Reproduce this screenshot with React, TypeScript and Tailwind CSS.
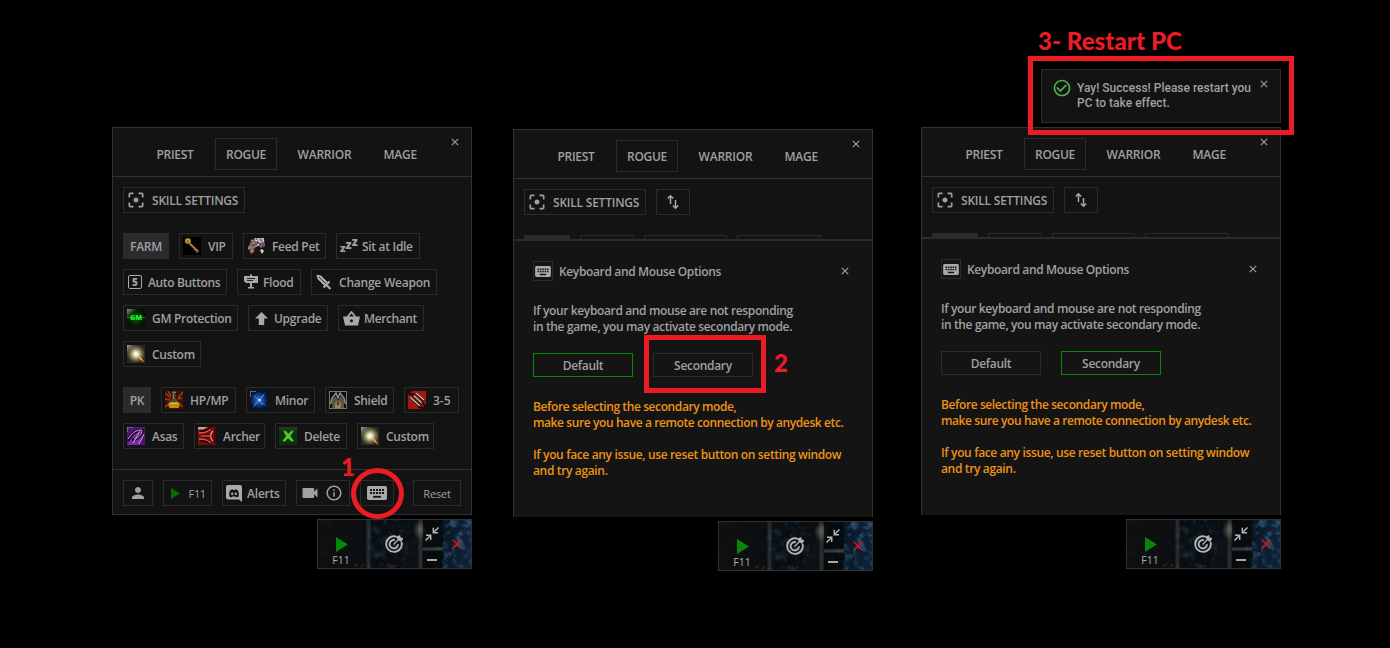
import React, { useId } from "react";
import { MdFilterCenterFocus, MdPerson, MdVideocam, MdInfoOutline, MdCheckCircleOutline } from "react-icons/md";

const art = "block h-[18px] w-[18px] shrink-0";

function Close({ className = "" }: { className?: string }) {
  return (
    <svg viewBox="0 0 8 8" className={`h-2 w-2 ${className}`} stroke="currentColor" strokeWidth="1.1" fill="none">
      <path d="M.8.8l6.4 6.4M7.2.8L.8 7.2" />
    </svg>
  );
}

function Keyboard({ className = "" }: { className?: string }) {
  return (
    <svg viewBox="0 0 20 14" className={className}>
      <rect width="20" height="14" rx="1.8" fill="#a9a9a9" />
      <path d="M3 4h14M3 7h14" stroke="#141414" strokeWidth="1.9" strokeDasharray="2 1" />
      <path d="M6 10.8h8" stroke="#141414" strokeWidth="1.9" />
    </svg>
  );
}

function SwapIcon() {
  return (
    <svg viewBox="0 0 12 16" className="h-4 w-3" fill="none" stroke="#a9a9a9" strokeWidth="1.500">
      <path d="M3.500 10V2M.8 4.500l2.700-2.700 2.700 2.700M8.500 6v8M5.800 11.500l2.700 2.700 2.700-2.700" />
    </svg>
  );
}

function KeyArt() {
  return (
    <svg viewBox="0 0 18 18" className={art}>
      <rect width="18" height="18" fill="#000" />
      <path d="M6.5 6.5l8.5 8" stroke="#8b6428" strokeWidth="2.4" />
      <path d="M6.5 6l8.5 8" stroke="#c79a4a" strokeWidth="1" />
      <path d="M11 13l1.6-1.4M13.4 15.4l2-2" stroke="#a8772c" strokeWidth="1.4" />
      <ellipse cx="4.9" cy="4" rx="3.2" ry="2.9" fill="#a07432" />
      <ellipse cx="4.9" cy="3.6" rx="1.7" ry="1.5" fill="#dcb366" />
      <circle cx="4.9" cy="3.8" r=".8" fill="#3a270d" />
    </svg>
  );
}

function PetArt() {
  return (
    <svg viewBox="0 0 18 18" className={art}>
      <rect width="18" height="18" fill="#17110f" />
      <path d="M1 10L5 3l4-2h8l1 8-4 2-2-2-4 1-1 5-3 2z" fill="#7d6b6a" />
      <path d="M7 1h10v3l-3 2-4-2z" fill="#b9aec6" />
      <path d="M3 6l3-2M7 6l3 2M11 6l3 3M5 9l2-1M13 2l2 2M15 6l2 2" stroke="#6a4b91" strokeWidth="1.3" />
      <path d="M1 12l3-3M4 15l3-5M4 3l2 1M8 10l2-1" stroke="#b98a6a" strokeWidth="1.3" />
      <path d="M8 3l2 1M12 5h1M16 4h1M6 6h1M10 8h2" stroke="#eee6ea" strokeWidth="1" />
      <path d="M2 8h1M6 8h1M10 5h1M13 7h1M9 2h1M15 9h1M11 10h1M3 13h1M6 12h1" stroke="#1d1216" strokeWidth="1.2" />
      <path d="M13 13l2-1 2 2-2 3-1-2z" fill="#d8d2d2" />
      <path d="M4 5h1M9 6h1" stroke="#b53a2c" strokeWidth="1.2" />
    </svg>
  );
}

function GmArt() {
  const id = useId();
  return (
    <svg viewBox="0 0 18 18" className={art}>
      <defs>
        <radialGradient id={id}><stop stopColor="#0a550a" /><stop offset="1" stopColor="#021402" /></radialGradient>
        <linearGradient id={id + "w"} x1="0" y1="0" x2="1" y2="1"><stop stopColor="#8a9a8a" /><stop offset=".3" stopColor="#8a9a8a" stopOpacity="0" /></linearGradient>
      </defs>
      <rect width="18" height="18" fill={`url(#${id})`} />
      <rect width="18" height="18" fill={`url(#${id}w)`} />
      <path d="M0 8.500h18" stroke="#18c818" strokeWidth=".6" />
      <text x="9" y="11.300" textAnchor="middle" fontSize="7" fontWeight="800" letterSpacing="0" fontFamily="Open Sans, sans-serif" fill="#22f022">GM</text>
    </svg>
  );
}

function GlowArt() {
  const id = useId();
  return (
    <svg viewBox="0 0 18 18" className={art}>
      <defs>
        <radialGradient id={id}>
          <stop stopColor="#fffff0" /><stop offset=".25" stopColor="#e9e5b8" /><stop offset=".55" stopColor="#8d8962" /><stop offset="1" stopColor="#2b2a1f" />
        </radialGradient>
        <linearGradient id={id + "w"} x1="0" y1="0" x2="1" y2="1"><stop stopColor="#a5a59c" /><stop offset=".28" stopColor="#a5a59c" stopOpacity="0" /></linearGradient>
      </defs>
      <rect width="18" height="18" fill="#25241b" />
      <rect width="18" height="18" fill={`url(#${id})`} />
      <rect width="18" height="18" fill={`url(#${id}w)`} />
      <path d="M11.500 11.500l4.500 4.500" stroke="#e3b45c" strokeWidth="1.500" />
      <path d="M15.500 15.500l1.800 1.800" stroke="#d93615" strokeWidth="1.500" />
    </svg>
  );
}

function FlaskArt() {
  return (
    <svg viewBox="0 0 18 18" className={art}>
      <rect width="18" height="18" fill="#3a130a" />
      <path d="M0 2l6 5M18 1l-5 6M0 16l4-3M18 16l-4-3M3 0l3 5M17 7l-4 1M0 8l5 1" stroke="#a43a13" strokeWidth="1.500" />
      <path d="M7.500 1h3v6l4.500 6-1.500 4h-9L3 13l4.500-6z" fill="#4b4538" />
      <path d="M7 1.200h4" stroke="#8c8377" strokeWidth="1.200" />
      <path d="M4.200 11.500h9.600L15 13l-1.500 4h-9L3 13z" fill="#c98a0b" />
      <path d="M5 12l4 .4 4-.6" stroke="#f4c433" strokeWidth="1.100" fill="none" />
      <path d="M8.500 3v5" stroke="#9a9184" strokeWidth=".8" />
    </svg>
  );
}

function StarArt() {
  const id = useId();
  return (
    <svg viewBox="0 0 18 18" className={art}>
      <defs><radialGradient id={id}><stop stopColor="#3a86e6" /><stop offset=".5" stopColor="#124590" /><stop offset="1" stopColor="#061230" /></radialGradient></defs>
      <rect width="18" height="18" fill="#061230" />
      <rect width="18" height="18" fill={`url(#${id})`} />
      <path d="M1 4l7 4 8-7-5 8 6 7-7-5-8 6 6-8z" fill="#2563b5" />
      <path d="M4 4l9 10M14 4L4 14" stroke="#5aa6f5" strokeWidth=".6" />
      <circle cx="9.500" cy="9" r="1.300" fill="#d4eeff" />
      <path d="M0 6V0h6" stroke="#7d8799" strokeWidth="1.300" fill="none" />
    </svg>
  );
}

function ShieldArt() {
  return (
    <svg viewBox="0 0 18 18" className={art}>
      <rect x=".5" y=".5" width="17" height="17" fill="#0e0d0b" stroke="#77776f" />
      <path d="M3 17V9l3-4 3 4 3-4 3 4v8z" fill="#5c543d" />
      <path d="M6 17v-5l3-3 3 3v5z" fill="#8c8260" />
      <path d="M1.500 13L3 7l4-5 2 5 2-5 4 5 1.500 6" stroke="#8794a3" strokeWidth="1.400" fill="none" />
      <path d="M9 8v6" stroke="#2a1e10" strokeWidth="1.500" /><path d="M9 9.500v1.500" stroke="#e08c2d" />
    </svg>
  );
}

function BladesArt() {
  return (
    <svg viewBox="0 0 18 18" className={art}>
      <rect width="18" height="18" fill="#a51513" />
      <path d="M0 0h4L0 4zM18 18v-4l-4 4z" fill="#2b0505" />
      <path d="M2 6l10 9M4 3l11 11M8 2l8 8" stroke="#241210" strokeWidth="2.600" />
      <path d="M2 6l10 9M4.500 3.500l11 10M8 2l8 7" stroke="#d9b8b2" strokeWidth="1.300" />
      <path d="M1 3l5 1M10 16l6 1M14 11l3 4" stroke="#150908" strokeWidth="1.800" />
    </svg>
  );
}

function AsasArt() {
  return (
    <svg viewBox="0 0 18 18" className={art}>
      <rect width="18" height="18" fill="#4e1770" />
      <path d="M0 18L9 4l9-4-6 18z" fill="#7b2ba6" />
      <path d="M1 14C4 7 9 3 16 3c-1 5-5 9-11 10" stroke="#160520" strokeWidth="2.800" fill="none" />
      <path d="M1 12C5 6 9 3 15 3c0 4-3 8-8 9M6 16l7-12M12 17l5-10" stroke="#d9a3ee" strokeWidth="1" fill="none" />
      <path d="M0 5V0h6" stroke="#a08bab" strokeWidth="1.200" fill="none" />
    </svg>
  );
}

function ArcherArt() {
  return (
    <svg viewBox="0 0 18 18" className={art}>
      <rect width="18" height="18" fill="#7d0d0d" />
      <path d="M0 0h10L5 2.500H0z" fill="#b9a5a3" />
      <path d="M2 5c5 0 8-1 11-4M3 9h12M2 13c5 0 8 1 11 4" stroke="#1c0303" strokeWidth="3" fill="none" />
      <path d="M1 6c6 0 8-1 12-4M3 9h9M1 12c6 0 8 1 12 4" stroke="#e2524d" strokeWidth="1.500" fill="none" />
      <path d="M15 4c-3 2-3 8 0 10" stroke="#ff9a92" strokeWidth="1.200" fill="none" />
      <path d="M17 1v16" stroke="#2b0606" strokeWidth="1.500" />
    </svg>
  );
}

function DeleteArt() {
  return (
    <svg viewBox="0 0 18 18" className={art}>
      <rect width="18" height="18" fill="#0d2f12" />
      <path d="M0 0h18v3H0z" fill="#1e3c23" />
      <path d="M3 3h4l2.500 3L12 3h4l-4 6 4 6h-4l-3-3-3 3H2l4.500-6z" fill="#38a51e" stroke="#071c08" strokeWidth=".7" />
      <path d="M5.500 5l8 8.500M13 5l-8 9" stroke="#6bd136" strokeWidth="1.200" />
    </svg>
  );
}

function FloodIcon() {
  return (
    <svg viewBox="0 0 16 16" className="h-4 w-4">
      <path d="M7 .5h2V2h6v7H9v4h2v1.500H5V13h2V9H3L1 7V2h6z" fill="#a9a9a9" />
      <path d="M4 4.500h8M4 6.500h6" stroke="#141414" strokeWidth=".9" />
    </svg>
  );
}

function SwordIcon() {
  return (
    <svg viewBox="0 0 16 16" className="h-4 w-4" fill="none" stroke="#a9a9a9">
      <path d="M1 1l1 4 7 7 3-3-7-7z" fill="#a9a9a9" />
      <path d="M3 3l7.500 7.500" stroke="#141414" strokeWidth=".8" />
      <path d="M7.500 13.500l6-6M10.500 11l4 4" strokeWidth="2.200" />
    </svg>
  );
}

function BasketIcon() {
  return (
    <svg viewBox="0 0 17 15" className="h-[15px] w-[17px]">
      <path d="M4.500 6L8.500 1l4 5" stroke="#a9a9a9" strokeWidth="1.800" fill="none" />
      <path fillRule="evenodd" d="M0 5.500h17L15 14.500H2zM8.500 8.300a1.500 1.500 0 100 3 1.500 1.500 0 000-3z" fill="#a9a9a9" />
    </svg>
  );
}

function DiscordIcon() {
  return (
    <svg viewBox="0 0 16 17" className="h-[17px] w-4">
      <path fillRule="evenodd" fill="#a9a9a9" d="M2 0h12a2 2 0 012 2v15l-3-2.500H2a2 2 0 01-2-2V2a2 2 0 012-2zM3.300 11.500L5.800 12.500l.7-1h3l.7 1 2.500-1c.5-2.700-.2-5-1.200-6.500L9.500 4.300l-.6.700H7.100l-.6-.7L4.500 5C3.400 6.700 2.800 8.800 3.300 11.500z" />
      <circle cx="6.200" cy="8.700" r="1.200" fill="#a9a9a9" /><circle cx="9.800" cy="8.700" r="1.200" fill="#a9a9a9" />
    </svg>
  );
}

function SleepIcon() {
  return (
    <span className="flex items-end pb-1 leading-none font-extrabold tracking-normal">
      <i className="text-[11px] leading-[11px] not-italic">z</i>
      <i className="mb-[3px] text-[12px] leading-[11px] not-italic">z</i>
      <i className="mb-[6px] text-[12px] leading-[11px] not-italic">z</i>
    </span>
  );
}

function Btn({ w, icon, pad = "pl-[3px]", slot = "w-[25px]", label, spacing = "" }: { w: string; icon?: React.ReactNode; pad?: string; slot?: string; label?: string; spacing?: string }) {
  return (
    <button className={`flex h-[26px] shrink-0 items-center border border-[#2b2b2d] whitespace-nowrap ${pad} ${w}`}>
      {icon && <span className={`flex shrink-0 items-center ${slot}`}>{icon}</span>}
      {label && <span className={`pt-0.5 ${spacing}`}>{label}</span>}
    </button>
  );
}

function Tag({ w, children }: { w: string; children?: string }) {
  return <div className={`flex h-[26px] shrink-0 items-center justify-center bg-[#2b2b2d] pt-0.5 ${w}`}>{children}</div>;
}

function Header() {
  return (
    <header className="relative flex h-[49px] shrink-0 items-center border-b border-[#323234] pt-1 pl-[34px]">
      <span className="w-[68px] pt-0.5 pl-[9.5px]">PRIEST</span>
      <span className="flex h-8 w-[62px] items-center justify-center border border-[#2b2b2d] pt-0.5">ROGUE</span>
      <span className="ml-5 w-[86.5px] pt-0.5 pl-[0.5px] tracking-[-0.2px]">WARRIOR</span>
      <span className="pt-0.5 tracking-[-0.2px]">MAGE</span>
      <Close className="absolute top-[10px] right-3" />
    </header>
  );
}

function Skill({ swap = false }: { swap?: boolean }) {
  return (
    <div className="flex gap-[10px]">
      <Btn w="w-[122px]" pad="pl-[2px]" slot="w-[26px]" icon={<MdFilterCenterFocus className="h-5 w-5" />} label="SKILL SETTINGS" spacing="tracking-[-0.22px]" />
      {swap && <Btn w="w-[34px]" pad="pl-[10px]" slot="w-3" icon={<SwapIcon />} />}
    </div>
  );
}

function FarmRow({ covered = false }: { covered?: boolean }) {
  return (
    <div className="flex gap-[10px]">
      <Tag w="w-[46px]">{covered ? undefined : "FARM"}</Tag>
      <Btn w="w-[54px]" icon={covered ? undefined : <KeyArt />} label={covered ? undefined : "VIP"} />
      <Btn w="w-[83px]" icon={covered ? undefined : <PetArt />} label={covered ? undefined : "Feed Pet"} />
      <Btn w="w-[84px]" slot="w-[22px]" icon={covered ? undefined : <SleepIcon />} label={covered ? undefined : "Sit at Idle"} />
    </div>
  );
}

function Launcher() {
  const id = useId();
  return (
    <div className="relative mt-1 flex h-[50px] w-[155px] self-end border border-[#303236] text-[#b0b0b0]">
      <svg viewBox="0 0 153 48" className="absolute inset-0 h-full w-full" preserveAspectRatio="none">
        <defs>
          <linearGradient id={id + "b"}>
            <stop stopColor="#0f0f0f" /><stop offset=".4" stopColor="#0a0e11" /><stop offset=".78" stopColor="#0a0f13" /><stop offset=".83" stopColor="#0a1826" /><stop offset="1" stopColor="#0e233a" />
          </linearGradient>
          <filter id={id + "n"} x="0" y="0" width="100%" height="100%" colorInterpolationFilters="sRGB">
            <feTurbulence type="fractalNoise" baseFrequency=".13" numOctaves="5" seed="8" />
            <feColorMatrix values="0 0 0 0 .2  0 0 0 0 .4  0 0 0 0 .54  3 0 0 0 -1.4" />
          </filter>
          <radialGradient id={id + "g"}><stop stopColor="#5b5848" /><stop offset="1" stopColor="#5b5848" stopOpacity="0" /></radialGradient>
        </defs>
        <rect width="153" height="48" fill={`url(#${id}b)`} />
        <rect width="50" height="48" filter={`url(#${id}n)`} opacity=".07" />
        <rect x="50" width="75" height="48" filter={`url(#${id}n)`} opacity=".3" />
        <rect x="124" width="29" height="48" filter={`url(#${id}n)`} opacity=".75" />
        <path d="M84 48l8-24 8-17 8 8 8 33z" fill="#0e1213" opacity=".75" />
        <ellipse cx="102" cy="10" rx="7" ry="10" fill={`url(#${id}g)`} />
        <path d="M36 46l4-2M43 47l3-3M68 46l3-2M76 47l3-2" stroke="#8a3a1c" strokeWidth="1.500" opacity=".4" />
        <path d="M50.500 0v48M102.500 0v48" stroke="#687079" strokeWidth="4" opacity=".28" />
        <path d="M105 0h20v26h-20zM105 31h20v17h-20z" fill="#050708" opacity=".65" />
        <path d="M105 29h20" stroke="#8c9390" strokeWidth="3" opacity=".3" />
      </svg>
      <div className="relative flex w-[49px] flex-col items-center pt-[17px] pr-[2px]">
        <svg viewBox="0 0 12 15" className="ml-px h-[15px] w-3"><path d="M0 0l12 7.500L0 15z" fill="#078607" /></svg>
        <span className="mt-[3px] mr-px text-[10.5px] leading-none font-normal tracking-normal">F11</span>
      </div>
      <div className="relative flex w-[54px] items-center justify-center">
        <svg viewBox="0 0 18 18" className="h-[18px] w-[18px]" fill="none" stroke="#b4b4b4" strokeWidth="1.900">
          <path d="M11.700 1.800A7.800 7.800 0 1016.500 7M10 5.200a4.200 4.200 0 103 4" />
          <path d="M8.500 9.500l5-5M12 2l1.500 2.500L16 6l1.500-2.500L15 3l-.3-2z" strokeWidth="1.300" fill="#b4b4b4" />
        </svg>
      </div>
      <div className="relative flex w-[22px] flex-col items-center">
        <svg viewBox="0 0 14 14" className="mt-[7px] h-[14px] w-[14px]" fill="none" stroke="#b4b4b4" strokeWidth="1.500">
          <path d="M13.500.5L9 5M8.300.7v5H13M.5 13.500L5 9M1 8.300h4.700V13" />
        </svg>
        <span className="mt-[18px] h-[2px] w-[10px] bg-[#a9a9a9]" />
      </div>
      <div className="relative flex w-[28px] items-center justify-center text-[#e51320]">
        <svg viewBox="0 0 10 10" className="h-[10px] w-[10px]" stroke="currentColor" strokeWidth="1.400"><path d="M.5.5l9 9M9.500.5l-9 9" /></svg>
      </div>
    </div>
  );
}

function SettingsPanel() {
  return (
    <section className="flex h-[388px] w-[360px] flex-col border border-[#323234] bg-[#131313]">
      <Header />
      <div className="flex h-[292px] flex-col px-[10px] pt-[10px]">
        <Skill />
        <div className="mt-5 flex flex-col gap-[10px]">
          <FarmRow />
          <div className="flex gap-[10px]">
            <Btn
              w="w-[104px]"
              pad="pl-1"
              slot="w-5"
              icon={<span className="flex h-[14px] w-[14px] items-center justify-center rounded-[2px] border-[1.500px] border-[#a9a9a9] text-[10px] leading-none font-extrabold tracking-normal">5</span>}
              label="Auto Buttons"
              spacing="tracking-[-0.36px]"
            />
            <Btn w="w-[64px]" pad="pl-[5px]" slot="w-5" icon={<FloodIcon />} label="Flood" />
            <Btn w="w-[126px]" pad="pl-1" slot="w-[23px]" icon={<SwordIcon />} label="Change Weapon" spacing="tracking-[-0.22px]" />
          </div>
          <div className="flex gap-[10px]">
            <Btn w="w-[115px]" icon={<GmArt />} label="GM Protection" />
            <Btn w="w-[80px]" pad="pl-[6px]" slot="w-[19px]" icon={<svg viewBox="0 0 12 12" className="h-[13px] w-[13px]"><path d="M6 0l6 6H8.500v6h-5V6H0z" fill="#a9a9a9" /></svg>} label="Upgrade" />
            <Btn w="w-[86px]" pad="pl-1" slot="w-[21px]" icon={<BasketIcon />} label="Merchant" spacing="tracking-[-0.4px]" />
          </div>
          <Btn w="w-[78px]" icon={<GlowArt />} label="Custom" />
        </div>
        <div className="mt-5 flex flex-col gap-[10px]">
          <div className="flex gap-[10px]">
            <Tag w="w-[28px]">PK</Tag>
            <Btn w="w-[75px]" icon={<FlaskArt />} label="HP/MP" spacing="tracking-[-0.2px]" />
            <Btn w="w-[69px]" icon={<StarArt />} label="Minor" />
            <Btn w="w-[69px]" icon={<ShieldArt />} label="Shield" />
            <Btn w="w-[55px]" icon={<BladesArt />} label="3-5" spacing="tracking-normal" />
          </div>
          <div className="flex gap-[10px]">
            <Btn w="w-[61px]" icon={<AsasArt />} label="Asas" />
            <Btn w="w-[71px]" icon={<ArcherArt />} label="Archer" />
            <Btn w="w-[72px]" icon={<DeleteArt />} label="Delete" />
            <Btn w="w-[77px]" icon={<GlowArt />} label="Custom" />
          </div>
        </div>
      </div>
      <footer className="flex flex-1 gap-[10px] border-t border-[#323234] px-[10px] pt-[10px]">
        <Btn w="w-[30px]" pad="pl-[5px]" slot="w-[18px]" icon={<MdPerson className="h-[18px] w-[18px] shrink-0" />} />
        <Btn w="w-[49px]" pad="pl-[7px]" slot="w-[17.5px]" icon={<svg viewBox="0 0 9 11" className="h-[11px] w-[9px]"><path d="M0 0l9 5.500L0 11z" fill="#076b07" /></svg>} label="F11" spacing="text-[11px] font-normal" />
        <Btn w="w-[64px]" slot="w-[21px]" icon={<DiscordIcon />} label="Alerts" spacing="tracking-[-0.2px]" />
        <Btn w="w-[54px]" pad="pl-[3px]" slot="w-[44px]" icon={<><MdVideocam className="h-5 w-5" /><MdInfoOutline className="ml-[5px] h-[18px] w-[18px]" /></>} />
        <div className="relative">
          <Btn w="w-[34px]" pad="pl-[6px]" slot="w-5" icon={<Keyboard className="h-[14px] w-5" />} />
          <div className="absolute top-[-12px] left-[-9px] h-[51px] w-[53px] rounded-[50%] border-5 border-[#ed1c24]" />
          <span className="absolute top-[-25px] left-[-19px] font-['Lato'] text-[24px] leading-none font-black text-[#ed1c24]">1</span>
        </div>
        <button className="ml-[9px] flex h-[26px] w-[48px] items-center justify-center border border-[#2b2b2d] pt-0.5 text-[11px] font-normal tracking-[-0.2px]">Reset</button>
      </footer>
    </section>
  );
}

function OptionsPanel({ mode }: { mode: "Default" | "Secondary" }) {
  const option = "flex h-6 w-[100px] items-center justify-center border pt-0.5";
  return (
    <section className="relative flex h-[388px] w-[360px] flex-col border border-b-0 border-[#323234] bg-[#131313]">
      <Header />
      <div className="flex h-[60px] flex-col overflow-hidden px-[10px] pt-[10px]">
        <Skill swap />
        <div className="mt-5"><FarmRow covered /></div>
      </div>
      <div className="flex flex-1 flex-col border-t-2 border-[#2b2b2d] bg-[#141414] px-[19px] pt-5">
        <div className="flex items-center">
          <span className="flex h-5 w-5 items-center justify-center border border-[#2b2b2d]"><Keyboard className="h-[11px] w-4" /></span>
          <span className="ml-[6px] pt-0.5 tracking-[-0.36px]">Keyboard and Mouse Options</span>
          <Close className="mr-1 ml-auto" />
        </div>
        <p className="mt-[22px] tracking-[-0.37px] whitespace-nowrap">If your keyboard and mouse are not responding<br />in the game, you may activate secondary mode.</p>
        <div className="mt-[18px] flex gap-5">
          <div className={`${option} ${mode === "Default" ? "border-[#078607]" : "border-[#2b2b2d]"}`}>Default</div>
          <div className={`relative ${option} ${mode === "Secondary" ? "border-[#078607]" : "border-[#2b2b2d]"}`}>
            Secondary
            {mode === "Default" && (
              <>
                <div className="absolute top-[-19px] left-[-10px] h-[58px] w-[122px] border-5 border-[#ed1c24]" />
                <span className="absolute top-[-3px] left-[120px] font-['Lato'] text-[24px] leading-none font-black text-[#ed1c24]">2</span>
              </>
            )}
          </div>
        </div>
        <p className="mt-[22px] tracking-[-0.4px] whitespace-nowrap text-[#ee9216]">Before selecting the secondary mode,<br />make sure you have a remote connection by anydesk etc.</p>
        <p className="mt-4 tracking-[-0.35px] whitespace-nowrap text-[#ee9216]">If you face any issue, use reset button on setting window<br />and try again.</p>
      </div>
    </section>
  );
}

function Toast() {
  return (
    <div className="absolute top-[-71px] left-[107px] z-10 h-[79px] w-[266px] border-5 border-[#ed1c24] p-2">
      <span className="absolute top-[-34px] left-[5px] font-['Lato'] text-[24px] leading-7 font-black tracking-[0.08px] whitespace-nowrap text-[#ed1c24]">3- Restart PC</span>
      <div className="flex h-[54px] w-[240px] border border-[#2b2b2d] bg-[#131313] pt-2 pl-[10px] font-['Roboto'] text-[12px] leading-[15px] font-medium tracking-normal">
        <MdCheckCircleOutline className="h-5 w-5 text-[#4caf50]" />
        <p className="mt-[3px] ml-[5px] whitespace-nowrap">Yay! Success! Please restart you<br />PC to take effect.</p>
        <Close className="mt-[2px] ml-[9px]" />
      </div>
    </div>
  );
}

export default function App() {
  return (
    <main className="flex h-[648px] w-[1390px] items-start overflow-hidden bg-black pt-[127px] pl-[112px] font-['Open_Sans','Noto_Sans',sans-serif] text-[12px] leading-4 font-semibold tracking-[-0.3px] text-[#a0a0a0]">
      <div className="flex flex-col"><SettingsPanel /><Launcher /></div>
      <div className="mt-[2px] ml-[41px] flex flex-col"><OptionsPanel mode="Default" /><Launcher /></div>
      <div className="relative ml-12 flex flex-col"><OptionsPanel mode="Secondary" /><Launcher /><Toast /></div>
    </main>
  );
}
